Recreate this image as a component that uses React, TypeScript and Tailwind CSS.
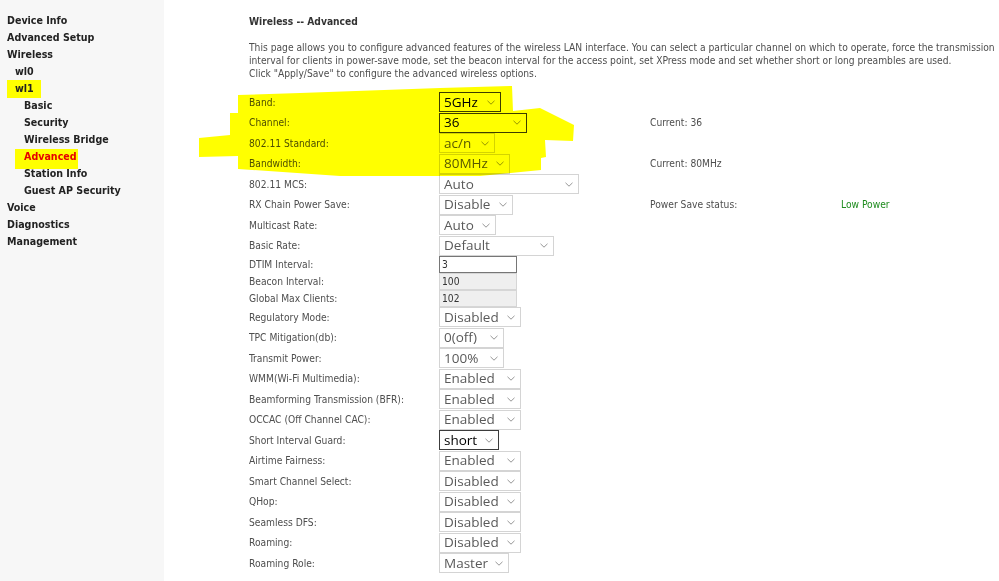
import React from "react";

type Row =
  | { kind: "select"; label: string; value: string; w: number; dark?: boolean; right?: string; status?: string }
  | { kind: "input"; label: string; value: string; readOnly?: boolean };

const rows: Row[] = [
  { kind: "select", label: "Band:", value: "5GHz", w: 62, dark: true },
  { kind: "select", label: "Channel:", value: "36", w: 88, dark: true, right: "Current: 36" },
  { kind: "select", label: "802.11 Standard:", value: "ac/n", w: 56 },
  { kind: "select", label: "Bandwidth:", value: "80MHz", w: 71, right: "Current: 80MHz" },
  { kind: "select", label: "802.11 MCS:", value: "Auto", w: 140 },
  { kind: "select", label: "RX Chain Power Save:", value: "Disable", w: 74, right: "Power Save status:", status: "Low Power" },
  { kind: "select", label: "Multicast Rate:", value: "Auto", w: 57 },
  { kind: "select", label: "Basic Rate:", value: "Default", w: 115 },
  { kind: "input", label: "DTIM Interval:", value: "3" },
  { kind: "input", label: "Beacon Interval:", value: "100", readOnly: true },
  { kind: "input", label: "Global Max Clients:", value: "102", readOnly: true },
  { kind: "select", label: "Regulatory Mode:", value: "Disabled", w: 82 },
  { kind: "select", label: "TPC Mitigation(db):", value: "0(off)", w: 65 },
  { kind: "select", label: "Transmit Power:", value: "100%", w: 65 },
  { kind: "select", label: "WMM(Wi-Fi Multimedia):", value: "Enabled", w: 82 },
  { kind: "select", label: "Beamforming Transmission (BFR):", value: "Enabled", w: 82 },
  { kind: "select", label: "OCCAC (Off Channel CAC):", value: "Enabled", w: 82 },
  { kind: "select", label: "Short Interval Guard:", value: "short", w: 60, dark: true },
  { kind: "select", label: "Airtime Fairness:", value: "Enabled", w: 82 },
  { kind: "select", label: "Smart Channel Select:", value: "Disabled", w: 82 },
  { kind: "select", label: "QHop:", value: "Disabled", w: 82 },
  { kind: "select", label: "Seamless DFS:", value: "Disabled", w: 82 },
  { kind: "select", label: "Roaming:", value: "Disabled", w: 82 },
  { kind: "select", label: "Roaming Role:", value: "Master", w: 70 },
];

const side: { text: string; indent: number; hl?: boolean; active?: boolean }[] = [
  { text: "Device Info", indent: 0 },
  { text: "Advanced Setup", indent: 0 },
  { text: "Wireless", indent: 0 },
  { text: "wl0", indent: 1 },
  { text: "wl1", indent: 1, hl: true },
  { text: "Basic", indent: 2 },
  { text: "Security", indent: 2 },
  { text: "Wireless Bridge", indent: 2 },
  { text: "Advanced", indent: 2, active: true },
  { text: "Station Info", indent: 2 },
  { text: "Guest AP Security", indent: 2 },
  { text: "Voice", indent: 0 },
  { text: "Diagnostics", indent: 0 },
  { text: "Management", indent: 0 },
];

const FONT = "font-['DejaVu_Sans_Condensed','DejaVu_Sans',sans-serif]";

function Chevron() {
  return (
    <svg width="8" height="5" viewBox="0 0 8 5" className="shrink-0">
      <path d="M0.5 0.8 L4 4.2 L7.5 0.8" fill="none" stroke="#8a8a8a" strokeWidth="0.9" />
    </svg>
  );
}

function FakeSelect({ value, w, dark }: { value: string; w: number; dark?: boolean }) {
  return (
    <div
      className={`flex h-[20px] items-center justify-between border bg-white pl-[4px] pr-[5px] font-['Open_Sans',sans-serif] text-[13.5px] leading-none ${
        dark ? "border-[#3c3c3c] text-black" : "border-[#d4d4d4] text-[#5a5a5a]"
      }`}
      style={{ width: w }}
    >
      <span>{value}</span>
      <Chevron />
    </div>
  );
}

export default function App() {
  return (
    <div className={`relative flex h-[581px] w-[999px] overflow-hidden bg-white ${FONT}`}>
      {/* Sidebar */}
      <div className="w-[164px] shrink-0 bg-[#f7f7f7] pt-[12px]">
        {side.map((s) => (
          <div
            key={s.text}
            className={`relative h-[17px] whitespace-nowrap text-[10.6px] font-bold leading-[17px] ${
              s.indent === 0 ? "pl-[7px]" : s.indent === 1 ? "pl-[15px]" : "pl-[24px]"
            } ${s.active ? "text-[#e60000]" : "text-[#222222]"}`}
          >
            {s.hl && <span className="absolute left-[7px] top-0 h-[18px] w-[34px] bg-[#ffff00]" />}
            {s.active && <span className="absolute left-[15px] top-[0.5px] h-[20px] w-[63px] bg-[#ffff00]" />}
            <span className="relative">{s.text}</span>
          </div>
        ))}
      </div>

      {/* Main */}
      <div className="min-w-0 flex-1 overflow-hidden pl-[85px] pt-[15px] text-[10.2px] text-[#4e4e4e]">
        <div className="h-[13px] text-[10.2px] font-bold leading-[13px] text-[#333333]">Wireless -- Advanced</div>
        <div className="mt-[13px] leading-[13px]">
          <div className="whitespace-nowrap">
            This page allows you to configure advanced features of the wireless LAN interface. You can select a particular channel on which to operate, force the transmission
          </div>
          <div className="whitespace-nowrap">
            interval for clients in power-save mode, set the beacon interval for the access point, set XPress mode and set whether short or long preambles are used.
          </div>
          <div className="whitespace-nowrap">Click "Apply/Save" to configure the advanced wireless options.</div>
        </div>

        <div className="mt-[12px]">
          {rows.map((r) => (
            <div
              key={r.label}
              className={`grid grid-cols-[190px_211px_191px_auto] items-center ${r.kind === "input" ? "h-[17px]" : "h-[20.5px]"}`}
            >
              <div className="whitespace-nowrap">{r.label}</div>
              <div>
                {r.kind === "select" ? (
                  <FakeSelect value={r.value} w={r.w} dark={r.dark} />
                ) : (
                  <div
                    className={`flex h-[17px] w-[78px] items-center border pl-[2px] text-[10.2px] text-[#333] ${
                      r.readOnly ? "border-[#d6d6d6] bg-[#efefef]" : "border-[#767676] bg-white"
                    }`}
                  >
                    {r.value}
                  </div>
                )}
              </div>
              <div className="whitespace-nowrap">{r.kind === "select" ? r.right ?? "" : ""}</div>
              <div className="whitespace-nowrap text-[#1e8c1e]">{r.kind === "select" ? r.status ?? "" : ""}</div>
            </div>
          ))}
        </div>
      </div>

      {/* Highlighter strokes */}
      <svg
        className="pointer-events-none absolute left-0 top-0 mix-blend-multiply"
        width="999"
        height="581"
        viewBox="0 0 999 581"
      >
        <path
          fill="#ffff00"
          d="M238 95 L300 93 L440 88 L512 86 L513 111 L540 108 L574 125 L573 141 L545 140 L546 157 L541 158 L541 170 L480 176 L340 176 L238 169 L238 156 L199 157 L199 138 L230 135 L230 113 L238 113 Z"
        />
      </svg>
    </div>
  );
}
